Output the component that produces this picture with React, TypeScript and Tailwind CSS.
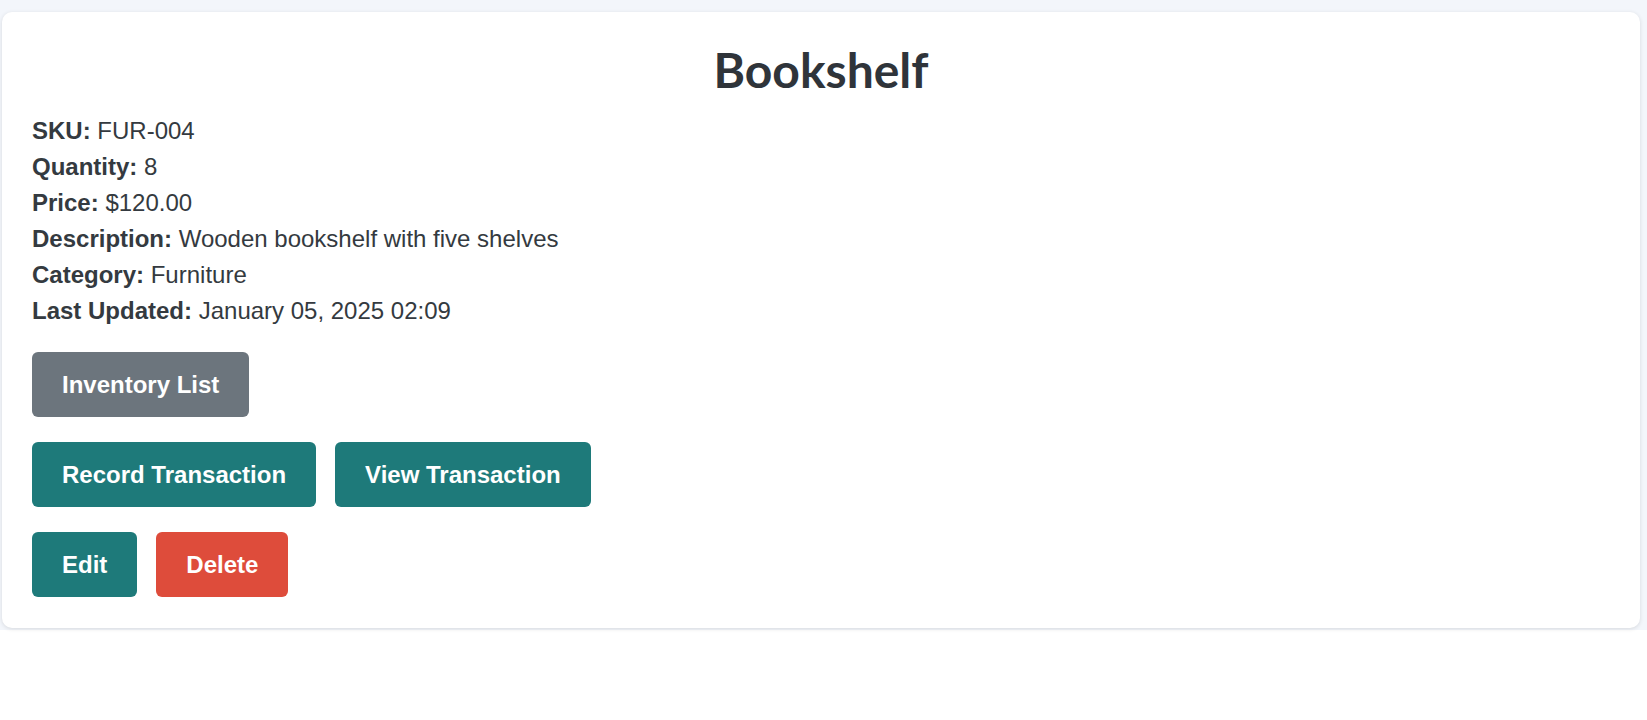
import React from 'react';

// Item detail page
const App = () => {
  const item = {
    name: 'Bookshelf',
    sku: 'FUR-004',
    quantity: 8,
    price: '$120.00',
    description: 'Wooden bookshelf with five shelves',
    category: 'Furniture',
    updated: 'January 05, 2025 02:09',
  };

  const fields = [
    { label: 'SKU', value: item.sku },
    { label: 'Quantity', value: item.quantity },
    { label: 'Price', value: item.price },
    { label: 'Description', value: item.description },
    { label: 'Category', value: item.category },
    { label: 'Last Updated', value: item.updated },
  ];

  const btn = 'h-[65px] px-[30px] rounded-[6px] text-white font-bold text-[24px] flex items-center';

  return (
    <div className="min-h-screen bg-white [font-family:Liberation_Sans,Arial,sans-serif] text-[#343a40]">
      <div className="bg-[#f3f6fb] pt-[12px] pl-[2px] pr-[7px] pb-[2px]">
        <div className="bg-white rounded-[10px] shadow-[0_1px_4px_rgba(0,0,0,0.12)] px-[30px] pt-[28px] pb-[31px]">
          <h1 className="text-center [font-family:Lato,sans-serif] font-bold text-[48px] leading-[60px] text-[#2f343a]">
            {item.name}
          </h1>

          {/* details */}
          <div className="mt-[13px] text-[24px] leading-[36px]">
            {fields.map(f => (
              <p key={f.label}>
                <span className="font-bold">{f.label}:</span> {f.value}
              </p>
            ))}
          </div>

          {/* actions */}
          <div className="mt-[23px] flex flex-col gap-[25px]">
            <div className="flex">
              <button className={`${btn} bg-[#6c757d]`}>Inventory List</button>
            </div>
            <div className="flex gap-[19px]">
              <button className={`${btn} bg-[#1e7a7a]`}>Record Transaction</button>
              <button className={`${btn} bg-[#1e7a7a]`}>View Transaction</button>
            </div>
            <div className="flex gap-[19px]">
              <button className={`${btn} bg-[#1e7a7a]`}>Edit</button>
              <button className={`${btn} bg-[#de4c3b]`}>Delete</button>
            </div>
          </div>
        </div>
      </div>
    </div>
  );
};

export default App;
